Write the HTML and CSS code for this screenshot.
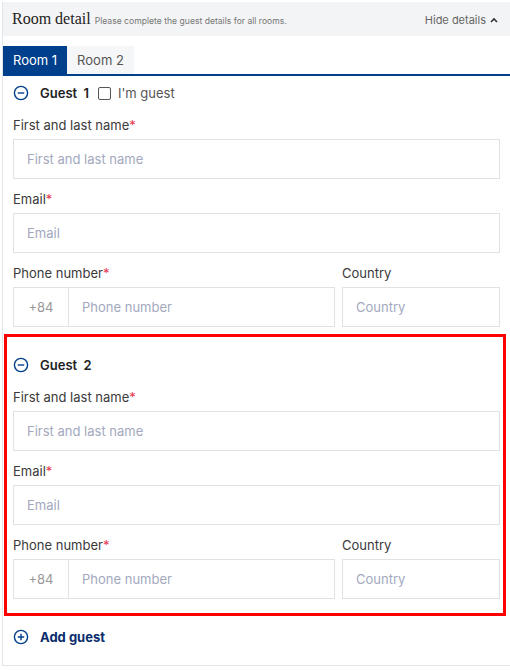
FILE: index.html
```html
<!DOCTYPE html>
<html lang="en">
<head>
<meta charset="utf-8">
<title>Room detail</title>
<link rel="stylesheet" href="styles.css">
</head>
<body>
<div class="card">
  <header class="card-head">
    <h2 class="title">Room detail</h2>
    <span class="subtitle">Please complete the guest details for all rooms.</span>
    <button class="toggle" type="button">Hide details
      <svg class="caret" viewBox="0 0 8 6" width="8" height="6"><path d="M1 5 L4 2 L7 5" fill="none" stroke="currentColor" stroke-width="1.6"/></svg>
    </button>
  </header>
  <div class="card-body">
    <nav class="tabs">
      <button class="tab tab--active" type="button">Room 1</button>
      <button class="tab" type="button">Room 2</button>
    </nav>

    <section class="guest guest--first">
      <div class="guest-head">
        <svg class="circle-icon" viewBox="0 0 16 16" width="16" height="16"><circle cx="8" cy="8" r="6.6" fill="none" stroke="currentColor" stroke-width="1.4"/><path d="M4.8 8 H11.2" stroke="currentColor" stroke-width="1.4"/></svg>
        <span class="guest-title">Guest <span class="guest-num">1</span></span>
        <label class="check"><span class="check-box"></span>I'm guest</label>
      </div>
      <div class="field">
        <label class="label">First and last name<span class="req">*</span></label>
        <input class="input" placeholder="First and last name">
      </div>
      <div class="field">
        <label class="label">Email<span class="req">*</span></label>
        <input class="input" placeholder="Email">
      </div>
      <div class="field-row">
        <div class="field">
          <label class="label">Phone number<span class="req">*</span></label>
          <div class="phone">
            <span class="prefix">+84</span>
            <input class="input input--phone" placeholder="Phone number">
          </div>
        </div>
        <div class="field">
          <label class="label">Country</label>
          <input class="input" placeholder="Country">
        </div>
      </div>
    </section>

    <section class="guest guest--highlight">
      <div class="guest-head">
        <svg class="circle-icon" viewBox="0 0 16 16" width="16" height="16"><circle cx="8" cy="8" r="6.6" fill="none" stroke="currentColor" stroke-width="1.4"/><path d="M4.8 8 H11.2" stroke="currentColor" stroke-width="1.4"/></svg>
        <span class="guest-title">Guest <span class="guest-num">2</span></span>
      </div>
      <div class="field">
        <label class="label">First and last name<span class="req">*</span></label>
        <input class="input" placeholder="First and last name">
      </div>
      <div class="field">
        <label class="label">Email<span class="req">*</span></label>
        <input class="input" placeholder="Email">
      </div>
      <div class="field-row">
        <div class="field">
          <label class="label">Phone number<span class="req">*</span></label>
          <div class="phone">
            <span class="prefix">+84</span>
            <input class="input input--phone" placeholder="Phone number">
          </div>
        </div>
        <div class="field">
          <label class="label">Country</label>
          <input class="input" placeholder="Country">
        </div>
      </div>
    </section>

    <button class="add-guest" type="button">
      <svg class="circle-icon" viewBox="0 0 16 16" width="16" height="16"><circle cx="8" cy="8" r="6.6" fill="none" stroke="currentColor" stroke-width="1.4"/><path d="M4.8 8 H11.2 M8 4.8 V11.2" stroke="currentColor" stroke-width="1.4"/></svg>
      <span>Add guest</span>
    </button>
  </div>
</div>
</body>
</html>
```

FILE: styles.css
```css
* { box-sizing: border-box; }

body {
  margin: 0;
  background: #ffffff;
  font-family: "Inter", "Open Sans", sans-serif;
  color: #333333;
}

.card {
  margin: 2px 0 0 2px;
  width: 508px;
  border-left: 1px solid #e3e6e8;
  border-bottom: 1px solid #e3e6e8;
}

.card-head {
  display: flex;
  align-items: baseline;
  height: 34px;
  padding: 0 12px 0 9px;
  background: #f3f4f5;
}

.title {
  margin: 0;
  font-family: "Liberation Serif", "DejaVu Serif", serif;
  font-weight: 400;
  font-size: 16px;
  line-height: 34px;
  color: #222;
}

.subtitle {
  margin-left: 4px;
  font-size: 8.6px;
  color: #777;
}

.toggle {
  margin-left: auto;
  border: 0;
  background: none;
  padding: 0;
  font-family: inherit;
  font-size: 11px;
  color: #666;
  display: flex;
  align-items: center;
  gap: 4px;
}

.caret { color: #333; }

.card-body {
  padding: 0 10px 20px 10px;
}

.tabs {
  display: flex;
  margin: 10px -10px 0 -10px;
  border-bottom: 2px solid #003f8c;
}

.tab {
  border: 0;
  height: 28px;
  padding: 0 10px 0 10px;
  font-family: inherit;
  font-size: 13px;
  background: #f5f6f7;
  color: #555;
}

.tab--active {
  background: #003f8c;
  color: #fff;
}

.guest--first {
  padding-top: 9px;
  padding-bottom: 7px;
}

.guest--highlight {
  margin: 0 -6px 0 -9px;
  padding: 20px 3px 14px 6px;
  border: 3px solid #ff0000;
}

.guest-head {
  display: flex;
  align-items: center;
  height: 16px;
  margin-bottom: 16px;
}

.circle-icon {
  color: #003f8c;
  flex: none;
}

.guest-title {
  margin-left: 11px;
  font-size: 13px;
  font-weight: 600;
  color: #222;
}

.guest-num { margin-left: 3px; }

.check {
  display: flex;
  align-items: center;
  margin-left: 9px;
  font-size: 13px;
  color: #555;
}

.check-box {
  width: 13px;
  height: 13px;
  border: 1px solid #555;
  border-radius: 2px;
  margin-right: 7px;
}

.field { margin-bottom: 12px; }
.field-row .field { margin-bottom: 0; }

.label {
  display: block;
  font-size: 13px;
  line-height: 16px;
  margin-bottom: 6px;
  color: #3a3a3a;
}

.req { color: #e53950; }

.input {
  display: block;
  width: 100%;
  height: 40px;
  border: 1px solid #dfe3e5;
  padding: 0 13px;
  font-family: inherit;
  font-size: 13px;
  color: #333;
  background: #fff;
  outline: none;
}

.input::placeholder { color: #a3a8be; }

.field-row {
  display: grid;
  grid-template-columns: 1fr 158px;
  gap: 7px;
}

.phone {
  display: flex;
}

.prefix {
  flex: none;
  width: 55px;
  height: 40px;
  border: 1px solid #dfe3e5;
  border-right: 0;
  display: flex;
  align-items: center;
  justify-content: center;
  font-size: 13px;
  color: #999;
}

.input--phone { flex: 1; }

.add-guest {
  display: flex;
  align-items: center;
  margin-top: 13px;
  border: 0;
  background: none;
  padding: 0;
  font-family: inherit;
  font-size: 13px;
  font-weight: 700;
  color: #0a2c6b;
}

.add-guest span { margin-left: 11px; }
```
